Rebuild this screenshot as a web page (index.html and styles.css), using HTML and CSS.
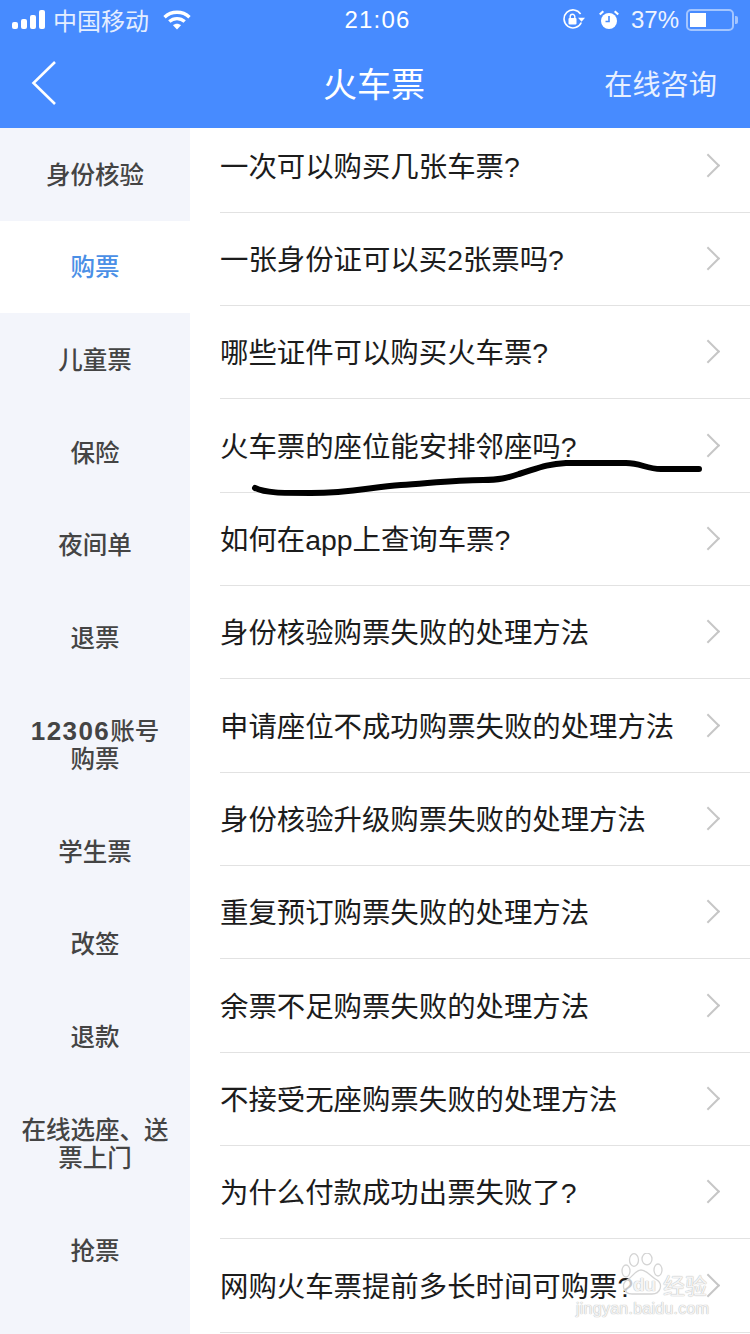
FILE: index.html
```html
<!DOCTYPE html>
<html lang="zh">
<head>
<meta charset="utf-8">
<title>火车票</title>
<link rel="stylesheet" href="styles.css">
</head>
<body>
<div class="page">
  <header class="top">
    <div class="status">
      <div class="status-left">
        <span class="signal"><i class="b1"></i><i class="b2"></i><i class="b3"></i><i class="b4"></i></span>
        <span class="carrier">中国移动</span>
        <svg class="wifi" width="28" height="20" viewBox="0 0 28 20"><path d="M1.5 7.2C8.500.6 19.500.6 26.500 7.200" fill="none" stroke="#fff" stroke-width="3.400"/><path d="M6.300 11.600c4.400-4 11-4 15.400 0" fill="none" stroke="#fff" stroke-width="3.400"/><path d="M10 15.200c2.400-2 5.600-2 8 0l-4 4.300z" fill="#fff"/></svg>
      </div>
      <div class="clock">21:06</div>
      <div class="status-right">
        <svg class="lock" width="24" height="22" viewBox="0 0 24 22"><path d="M19.300 13.500A9 9 0 1 1 18.600 5" fill="none" stroke="#fff" stroke-width="1.600"/><path d="M16 8.800h7l-3.500 4z" fill="#fff"/><rect x="6.500" y="9" width="8" height="6.500" rx="1" fill="#fff"/><path d="M8.200 9.500V7.600a2.300 2.300 0 0 1 4.600 0v1.900" fill="none" stroke="#fff" stroke-width="1.400"/></svg>
        <svg class="alarm" width="20" height="20" viewBox="0 0 20 20"><circle cx="10" cy="11" r="8" fill="#fff"/><path d="M10 6v5.500H6.500" fill="none" stroke="#478bff" stroke-width="1.600"/><path d="M.8 4.500 4.300 1.300M19.200 4.500 15.700 1.300" stroke="#fff" stroke-width="2.200"/></svg>
        <span class="pct">37%</span>
        <span class="battery"><span class="level"></span></span><span class="cap"></span>
      </div>
    </div>
    <nav class="nav">
      <svg class="back" width="26" height="46" viewBox="0 0 26 46"><path d="M24 2 2.500 23 24 44" fill="none" stroke="#fff" stroke-width="2.600"/></svg>
      <h1 class="title">火车票</h1>
      <span class="consult">在线咨询</span>
    </nav>
  </header>
  <main class="body">
    <aside class="side">
      <div class="cat">身份核验</div>
      <div class="cat active">购票</div>
      <div class="cat">儿童票</div>
      <div class="cat">保险</div>
      <div class="cat">夜间单</div>
      <div class="cat">退票</div>
      <div class="cat tall"><span><b>12306</b>账号<br>购票</span></div>
      <div class="cat">学生票</div>
      <div class="cat">改签</div>
      <div class="cat">退款</div>
      <div class="cat tall"><span>在线选座、送<br>票上门</span></div>
      <div class="cat">抢票</div>
    </aside>
    <section class="list">
      <div class="row"><span>一次可以购买几张车票?</span><i class="chev"></i></div>
      <div class="row"><span>一张身份证可以买2张票吗?</span><i class="chev"></i></div>
      <div class="row"><span>哪些证件可以购买火车票?</span><i class="chev"></i></div>
      <div class="row"><span>火车票的座位能安排邻座吗?</span><i class="chev"></i></div>
      <div class="row"><span>如何在app上查询车票?</span><i class="chev"></i></div>
      <div class="row"><span>身份核验购票失败的处理方法</span><i class="chev"></i></div>
      <div class="row"><span>申请座位不成功购票失败的处理方法</span><i class="chev"></i></div>
      <div class="row"><span>身份核验升级购票失败的处理方法</span><i class="chev"></i></div>
      <div class="row"><span>重复预订购票失败的处理方法</span><i class="chev"></i></div>
      <div class="row"><span>余票不足购票失败的处理方法</span><i class="chev"></i></div>
      <div class="row"><span>不接受无座购票失败的处理方法</span><i class="chev"></i></div>
      <div class="row"><span>为什么付款成功出票失败了?</span><i class="chev"></i></div>
      <div class="row"><span>网购火车票提前多长时间可购票?</span><i class="chev"></i></div>
    </section>
  </main>
  <svg class="scribble" width="470" height="50" viewBox="0 0 470 50"><path d="M4 30C14 35 30 35 60 35 100 35 120 29 150 27 180 25 205 22 232 22 248 22 256 20 268 16 285 11 295 6 315 5H375C390 5 395 11 410 11H448" fill="none" stroke="#000" stroke-width="6" stroke-linecap="round" stroke-linejoin="round"/></svg>
  <div class="mark">
    <svg class="paw" width="42" height="42" viewBox="0 0 42 42"><g fill="#fff" fill-opacity=".75" stroke="#d4d4d4" stroke-width="1.300"><ellipse cx="5" cy="18" rx="4" ry="6"/><ellipse cx="13" cy="7" rx="4.500" ry="6.300"/><ellipse cx="26" cy="6" rx="5" ry="5.800"/><ellipse cx="37" cy="17" rx="4" ry="6"/><path d="M20 17C14 17 12 24 6 27 0 31 2 41 11 41H31C40 41 42 31 36 27 30 24 26 17 20 17z"/></g></svg>
    <span class="mark-du">du</span>
    <span class="mark-name">经验</span>
    <span class="mark-url">jingyan.baidu.com</span>
  </div>
</div>
</body>
</html>
```
FILE: styles.css
```css
* { box-sizing: border-box; margin: 0; padding: 0; }
html, body { width: 750px; height: 1334px; overflow: hidden; background: #fff; }
body { font-family: "Noto Sans CJK SC", "Liberation Sans", sans-serif; }
.page { position: relative; width: 750px; height: 1334px; overflow: hidden; }
.top { height: 128px; background: #478bff; color: #fff; }
.status { height: 40px; padding: 0 12px; display: grid; grid-template-columns: 1fr auto 1fr; align-items: center; }
.status-left { display: flex; align-items: center; }
.signal { display: flex; align-items: flex-end; gap: 3px; width: 34px; height: 17px; }
.signal i { width: 6px; background: #fff; border-radius: 2px; display: block; }
.b1 { height: 7px; } .b2 { height: 10px; } .b3 { height: 14px; } .b4 { height: 19px; }
.carrier { margin-left: 7px; font-size: 24px; line-height: 30px; color: #e4eeff; }
.wifi { margin-left: 14px; }
.clock { font-family: "Liberation Sans", sans-serif; font-size: 24px; letter-spacing: 1.200px; margin-left: 5px; }
.status-right { display: flex; align-items: center; justify-content: flex-end; }
.lock { margin-right: 1px; }
.alarm { margin-left: 12px; }
.pct { margin-left: 12px; font-family: "Liberation Sans", sans-serif; font-size: 24px; color: #eef4ff; }
.battery { margin-left: 7px; width: 48px; height: 22px; border: 2px solid #a3c5ff; border-radius: 5px; padding: 2px; display: flex; }
.level { width: 16px; background: #fff; display: block; }
.cap { width: 3px; height: 8px; margin-left: 1px; background: #a3c5ff; border-radius: 0 2px 2px 0; }
.nav { height: 88px; padding: 0 33px 0 31px; display: grid; grid-template-columns: 1fr auto 1fr; align-items: center; }
.back { display: block; margin-top: -3px; }
.title { font-size: 34px; font-weight: 400; line-height: 46px; margin-top: -3px; }
.consult { justify-self: end; font-size: 28.200px; line-height: 38px; color: #e8f0ff; margin-top: -3px; }
.body { display: flex; height: 1206px; overflow: hidden; }
.side { flex: 0 0 190px; background: #f3f5fb; display: flex; flex-direction: column; }
.cat { height: 92.600px; flex: none; display: flex; align-items: center; justify-content: center; text-align: center; font-size: 24.500px; font-weight: 500; line-height: 28px; color: #444; padding: 0 0 1px; }
.cat b { font-family: "Liberation Sans", sans-serif; font-size: 26px; line-height: 1; font-weight: 700; letter-spacing: 1.400px; }
.cat.tall { height: 121.300px; padding: 0; }
.cat.active { background: #fff; color: #4a8fe6; }
.list { flex: 1; margin-top: -8.500px; padding-left: 30px; }
.row { height: 93.330px; border-bottom: 1.500px solid #e2e2e2; display: flex; align-items: center; justify-content: space-between; padding: 0 32px 3px 0; font-family: "Liberation Sans", "Noto Sans CJK SC", sans-serif; font-size: 28.400px; color: #1c1c1c; }
.chev { width: 17px; height: 17px; border-top: 2.500px solid #c6c6c6; border-right: 2.500px solid #c6c6c6; transform: rotate(45deg) translate(-.3px, 1.700px); }
.scribble { position: absolute; left: 251px; top: 458px; }
.mark { position: absolute; left: 574px; top: 1252px; width: 176px; height: 82px; color: rgba(255,255,255,.85); text-shadow: 0 0 1px #bbb, 0 0 1px #bbb; }
.paw { position: absolute; left: 47px; top: 1px; }
.mark-du { position: absolute; left: 59px; top: 22px; font-family: "Liberation Sans", sans-serif; font-size: 19px; font-weight: 700; }
.mark-name { position: absolute; left: 89px; top: 17px; font-size: 22px; line-height: 30px; }
.mark-url { position: absolute; left: 2px; top: 48px; font-family: "Liberation Sans", sans-serif; font-size: 16px; letter-spacing: .25px; white-space: nowrap; }
```
